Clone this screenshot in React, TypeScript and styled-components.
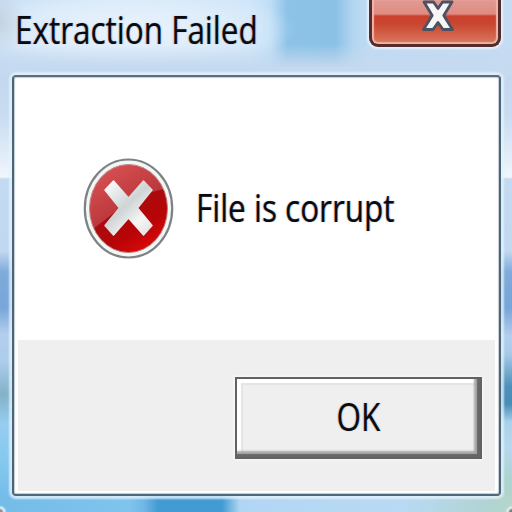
import React from 'react'
import styled, { createGlobalStyle } from 'styled-components'

const GlobalStyle = createGlobalStyle`
  * {
    box-sizing: border-box;
  }
  body {
    margin: 0;
    overflow: hidden;
    font-family: 'Open Sans', 'Noto Sans', sans-serif;
  }
`

const Window = styled.div`
  width: 512px;
  height: 512px;
  overflow: hidden;
  display: flex;
  flex-direction: column;
  background:
    radial-gradient(circle at 0 512px, #8b8f94 2px, #e4f4fc 4px, transparent 7px),
    radial-gradient(circle at 512px 512px, #777b7e 2px, #e4f0ec 4px, transparent 7px),
    linear-gradient(
        90deg,
        #74bce8 0,
        #7fc4ed 130px,
        #6fb7e5 144px,
        #429bd3 158px,
        #429bd3 222px,
        #b1d6f3 240px,
        #b9daf4 400px,
        #b0d4d2 490px,
        #b4d6cb 512px
      )
      0 496px / 512px 16px no-repeat,
    linear-gradient(
        #c3d8ee 0,
        #c8dcf2 40px,
        #f0f6fc 101px,
        #c4daf3 103px,
        #c1d8f1 175px,
        #7faadb 196px,
        #78a6d9 232px,
        #b3ceee 258px,
        #adcdea 285px,
        #84b2c8 318px,
        #96cdf0 348px,
        #83c7ef 390px,
        #6bb7e6 436px
      )
      0 76px / 14px 436px no-repeat,
    linear-gradient(
        #c3d8ee 0,
        #c8dcf2 40px,
        #f0f6fc 101px,
        #c4daf3 103px,
        #c1d8f1 175px,
        #7faadb 196px,
        #76a5d8 232px,
        #b3ceee 260px,
        #a8cae8 278px,
        #4c91ba 310px,
        #488cb8 328px,
        #a9d1eb 346px,
        #b8d8ee 370px,
        #acd3cd 405px,
        #b4d6cb 436px
      )
      498px 76px / 14px 436px no-repeat,
    #c5d9ef;
`

const TitleBar = styled.header`
  height: 75px;
  flex: none;
  display: flex;
  align-items: flex-start;
  justify-content: space-between;
  padding: 0 11px 0 15px;
  background:
    linear-gradient(transparent 44px, #c5d9ef 68px),
    radial-gradient(ellipse 26px 34px at 0 22px, #c4d3e2 0, transparent 100%),
    radial-gradient(ellipse 170px 46px at 125px 30px, #e9f3fd 0, #e2effbcc 60%, transparent 100%),
    linear-gradient(
      90deg,
      #c7dff5 0,
      #cfe5f9 250px,
      #bfdff6 270px,
      #8dc3e7 287px,
      #8ac1e5 335px,
      #b4d6f1 354px,
      #c0dbf3 370px,
      #c6dcf3 512px
    );
`

const TextLine = styled.span<{ $origin?: string }>`
  display: inline-block;
  font-size: 38px;
  line-height: 50px;
  color: #080a10;
  white-space: nowrap;
  transform: scaleX(0.828);
  transform-origin: ${(p) => p.$origin || 'left'} center;
  -webkit-text-stroke: 0.1px #080a10;
  text-shadow:
    -1px 0 1px rgba(220, 130, 40, 0.5),
    1px 0 1px rgba(30, 150, 230, 0.5);
`

const Title = styled.h1`
  width: 250px;
  margin: 4px 0 0;
  font-weight: 400;
  font-size: 38px;
  line-height: 50px;
`

const CloseButton = styled.button`
  width: 132px;
  height: 47px;
  padding: 0 0 0 6px;
  display: flex;
  justify-content: center;
  align-items: flex-start;
  border: 3px solid #552c2d;
  border-top: 0;
  border-radius: 0 0 9px 9px;
  background: linear-gradient(#e19a93 0, #df8b82 14px, #c9412d 16px, #ca4630 24px, #d97a60 44px);
  box-shadow:
    0 0 2px 2px #e6f1fb,
    inset 2px 0 1px #efb5ac,
    inset -2px 0 1px #efb5ac,
    inset 0 -2px 1px #eeb09d;
`

const Frame = styled.main`
  width: 489px;
  height: 421px;
  flex: none;
  margin: 0 0 0 12px;
  display: flex;
  flex-direction: column;
  border: 2px solid #5c6d7a;
  border-color: #5c6d7a #4c6478 #4d6878;
  border-radius: 4px;
  background: #fff;
  box-shadow:
    0 0 2px 3px rgba(226, 243, 253, 0.8),
    inset 0 0 1px 1px #c3cbd1;
`

const Message = styled.section`
  height: 263px;
  flex: none;
  display: flex;
  align-items: center;
  padding-left: 69px;
  gap: 21px;
`

const MessageText = styled.p`
  margin: 0;
  font-size: 38px;
  line-height: 50px;
  padding-bottom: 4px;
`

const Footer = styled.footer`
  flex: 1;
  margin: 0 4px 3px;
  padding: 37px 13px 0 0;
  display: flex;
  justify-content: flex-end;
  background: #efefef;
`

const OkButton = styled.button`
  width: 247px;
  height: 82px;
  padding: 0 0 4px;
  display: flex;
  justify-content: center;
  align-items: center;
  border: 2px solid #626262;
  border-radius: 0;
  background: #efefef;
  font-family: inherit;
  box-shadow:
    0 0 2px 1px #fafafa,
    inset -3px -3px 1px #666,
    inset -6px -6px 2px #a8a8a8,
    inset 4px 4px 1px #fff,
    inset 6px 6px 1px #e3e3e3;
`

function CloseGlyph() {
  return (
    <svg width="34" height="34" viewBox="0 0 34 34">
      <path
        d="M3 2H12.5L17 8.5L21.5 2H31L22.8 15.5L31.5 29.5H22L17 22.5L12 29.5H2.5L11.2 15.5Z"
        fill="#f6f6f7"
        stroke="#4c5263"
        strokeWidth="2.8"
        strokeLinejoin="round"
      />
    </svg>
  )
}

function ErrorIcon() {
  return (
    <svg width="92" height="104" viewBox="0 0 92 104">
      <defs>
        <linearGradient id="red" x1="0.2" y1="0" x2="0.75" y2="1">
          <stop offset="0" stopColor="#d0282c" />
          <stop offset="0.5" stopColor="#ab0a0e" />
          <stop offset="0.75" stopColor="#b80407" />
          <stop offset="1" stopColor="#e00a0a" />
        </linearGradient>
        <linearGradient id="gloss" x1="0" y1="0" x2="0.6" y2="1">
          <stop offset="0" stopColor="#fff" stopOpacity="0.2" />
          <stop offset="1" stopColor="#fff" stopOpacity="0.18" />
        </linearGradient>
        <linearGradient id="cross" x1="0" y1="0" x2="0.8" y2="1">
          <stop offset="0" stopColor="#fff" />
          <stop offset="0.5" stopColor="#cfd4d4" />
          <stop offset="0.8" stopColor="#f6f6f6" />
          <stop offset="1" stopColor="#e6e6e6" />
        </linearGradient>
        <clipPath id="disc">
          <ellipse cx="45.5" cy="51.5" rx="39" ry="44" />
        </clipPath>
      </defs>
      <ellipse cx="45.5" cy="51.5" rx="43.7" ry="49" fill="#f4f6f6" stroke="#7d8282" strokeWidth="2.2" />
      <ellipse cx="45.5" cy="51.5" rx="39" ry="44" fill="url(#red)" stroke="#b98080" strokeWidth="1" />
      <path d="M0 0H92V31C62 32 42 47 9 73L0 76Z" fill="url(#gloss)" clipPath="url(#disc)" />
      <path
        d="M30.5 24L45.5 41L60.5 24L69 33L54.5 51L69 68.5L60.5 78L45.5 61L30.5 78L22 68.5L36.5 51L22 33Z"
        fill="url(#cross)"
        stroke="url(#cross)"
        strokeWidth="1.5"
        strokeLinejoin="round"
      />
    </svg>
  )
}

export default function App() {
  return (
    <>
      <GlobalStyle />
      <Window>
        <TitleBar>
          <Title>
            <TextLine>Extraction Failed</TextLine>
          </Title>
          <CloseButton aria-label="Close">
            <CloseGlyph />
          </CloseButton>
        </TitleBar>
        <Frame>
          <Message>
            <ErrorIcon />
            <MessageText>
              <TextLine>File is corrupt</TextLine>
            </MessageText>
          </Message>
          <Footer>
            <OkButton>
              <TextLine $origin="center">OK</TextLine>
            </OkButton>
          </Footer>
        </Frame>
      </Window>
    </>
  )
}
